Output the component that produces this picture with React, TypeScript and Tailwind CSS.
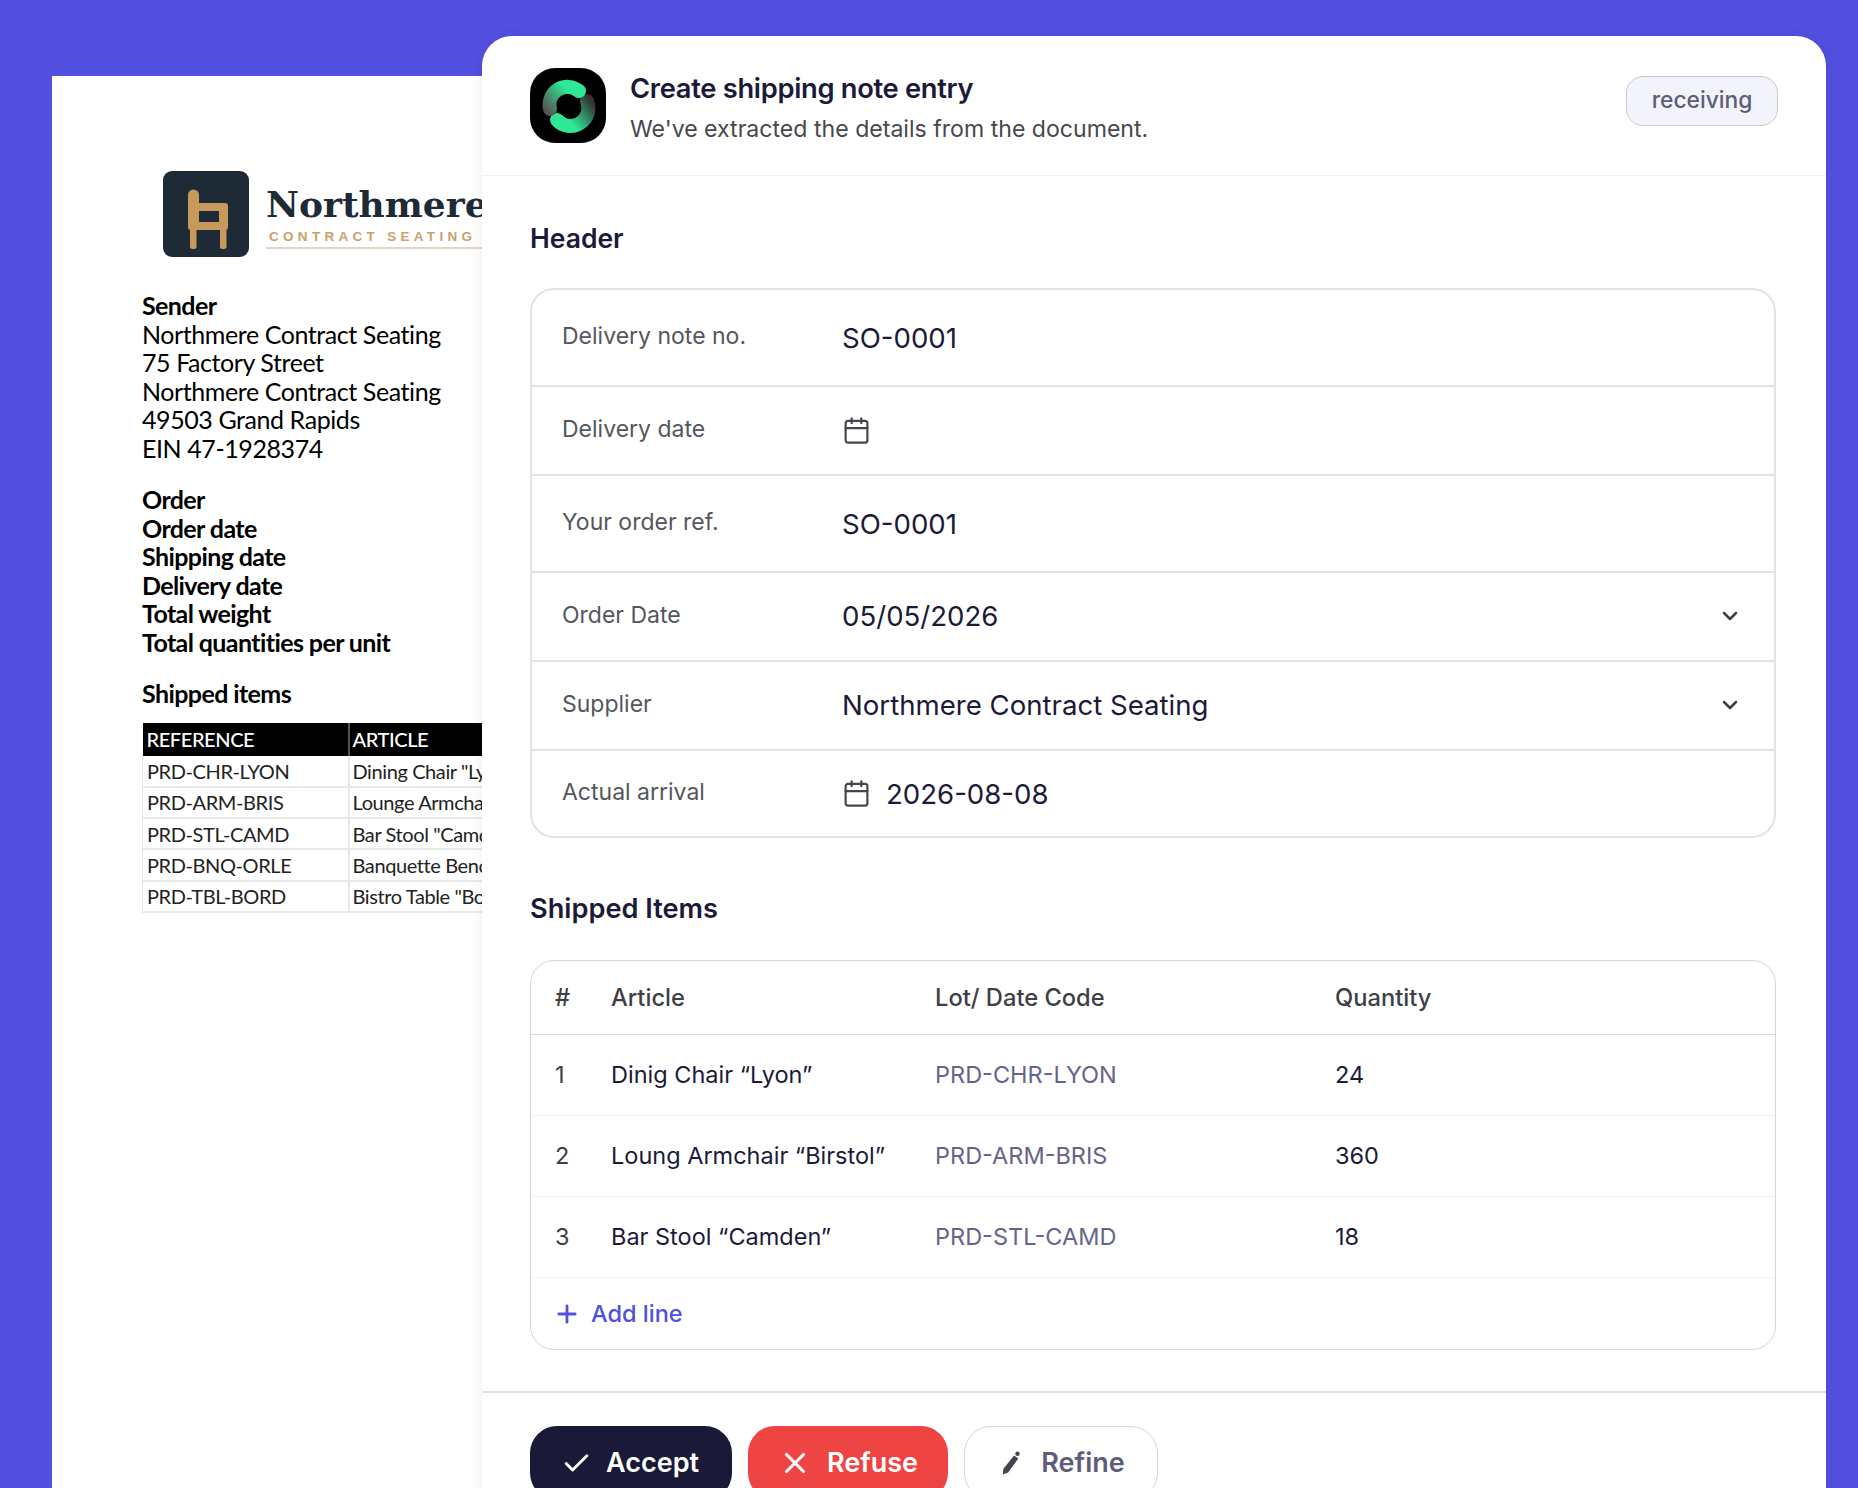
import { Calendar, Check, ChevronDown, Plus, X } from 'lucide-react';

const DOC_ROWS = [
  ['PRD-CHR-LYON', 'Dining Chair "Lyon"'],
  ['PRD-ARM-BRIS', 'Lounge Armchair "Bristol"'],
  ['PRD-STL-CAMD', 'Bar Stool "Camden"'],
  ['PRD-BNQ-ORLE', 'Banquette Bench "Orleans"'],
  ['PRD-TBL-BORD', 'Bistro Table "Bordeaux"'],
];

const ITEMS = [
  ['1', 'Dinig Chair “Lyon”', 'PRD-CHR-LYON', '24'],
  ['2', 'Loung Armchair “Birstol”', 'PRD-ARM-BRIS', '360'],
  ['3', 'Bar Stool “Camden”', 'PRD-STL-CAMD', '18'],
];

function AppLogo() {
  return (
    <svg width="76" height="75" viewBox="0 0 76 75" className="shrink-0">
      <defs>
        <linearGradient id="arcTop" gradientUnits="userSpaceOnUse" x1="46" y1="18" x2="16" y2="42">
          <stop offset="0.25" stopColor="#2ee896" />
          <stop offset="1" stopColor="#555555" />
        </linearGradient>
        <linearGradient id="arcBottom" gradientUnits="userSpaceOnUse" x1="30" y1="56" x2="60" y2="32">
          <stop offset="0.25" stopColor="#2ee896" />
          <stop offset="1" stopColor="#333333" />
        </linearGradient>
      </defs>
      <rect width="76" height="75" rx="25" fill="#000" />
      <path d="M27 52A18 18 0 0 0 57 33" fill="none" stroke="url(#arcBottom)" strokeWidth="14" strokeLinecap="round" />
      <path d="M49 23A18 18 0 0 0 20 41" fill="none" stroke="url(#arcTop)" strokeWidth="14" strokeLinecap="round" />
    </svg>
  );
}

function ChairLogo() {
  return (
    <svg width="86" height="86" viewBox="0 0 86 86" className="shrink-0">
      <rect width="86" height="86" rx="9" fill="#1f2a37" />
      <path
        fillRule="evenodd"
        d="M25 24a5.500 5.500 0 0 1 11 0v8h26a3 3 0 0 1 3 3v21a3 3 0 0 1-3 3H28a3 3 0 0 1-3-3zM36 40v11h20V40z"
        fill="#c79a5b"
      />
      <rect x="27" y="56" width="6.500" height="22" rx="2.500" fill="#c79a5b" />
      <rect x="57" y="56" width="6.500" height="22" rx="2.500" fill="#c79a5b" />
    </svg>
  );
}

function PencilIcon() {
  return (
    <svg width="20" height="24" viewBox="0 0 20 24" className="shrink-0" fill="#45454f">
      <path d="M13 4.500l4.300 3L7.200 21.500 1.800 23.500 2.300 18z" />
      <circle cx="16.500" cy="2.800" r="2.200" />
    </svg>
  );
}

function FormRow({ label, tall, children }: { label: string; tall?: boolean; children?: React.ReactNode }) {
  return (
    <div className={`flex items-center border-b-2 border-[#e3e3e5] pl-[30px] pr-[32px] last:h-[85px] last:border-b-0 ${tall ? 'h-[97px]' : 'h-[89px]'}`}>
      <div className="w-[280px] shrink-0 pb-[2px] text-[23px] text-[#55565c]">{label}</div>
      <div className={`flex min-w-0 flex-1 items-center text-[27.600px] text-[#1b1a38] ${tall ? 'mt-[3px]' : ''}`}>{children}</div>
    </div>
  );
}

export default function App() {
  return (
    <div className="flex h-[1488px] w-[1858px] overflow-hidden bg-[#534fe0] font-['Inter',sans-serif]">
      {/* Source document, cut off by the panel */}
      <div className="ml-[52px] mt-[76px] h-[1412px] w-[430px] shrink-0 overflow-hidden bg-white pl-[90px] pt-[95px] font-['Lato',sans-serif] text-[25px] leading-[28.500px] tracking-[-0.42px] text-black">
        <div className="flex w-[700px] pl-[21px]">
          <ChairLogo />
          <div className="ml-[17px] pt-[13px]">
            <div className="font-['DejaVu_Serif',serif] text-[36px] font-bold leading-[40px] tracking-normal text-[#1f2a37]">Northmere</div>
            <div className="mt-[5px] flex h-[20px] w-[300px] items-start border-b-2 border-[#e2d6c2] pl-[3px] font-['Liberation_Sans',sans-serif] text-[13.500px] font-bold leading-[16px] tracking-[4.300px] text-[#c9a26a]">
              CONTRACT SEATING
            </div>
          </div>
        </div>
        <div className="mt-[34px] w-[400px]">
          <div className="font-bold tracking-[-0.6px]">Sender</div>
          <div>Northmere Contract Seating</div>
          <div>75 Factory Street</div>
          <div>Northmere Contract Seating</div>
          <div>49503 Grand Rapids</div>
          <div>EIN 47-1928374</div>
        </div>
        <div className="mt-[23px] w-[400px] font-bold tracking-[-0.6px]">
          <div>Order</div>
          <div>Order date</div>
          <div>Shipping date</div>
          <div>Delivery date</div>
          <div>Total weight</div>
          <div>Total quantities per unit</div>
        </div>
        <div className="mt-[23px] font-bold tracking-[-0.6px]">Shipped items</div>
        <table className="mt-[15px] w-[700px] table-fixed border-collapse text-[20px] leading-[28px] tracking-[-0.4px] text-[#222]">
          <thead>
            <tr className="h-[33px] bg-black text-left font-medium text-white">
              <th className="w-[206px] border-r-2 border-[#555] pl-[4px] font-medium">REFERENCE</th>
              <th className="pl-[3px] font-medium">ARTICLE</th>
            </tr>
          </thead>
          <tbody>
            {DOC_ROWS.map(([ref, article]) => (
              <tr key={ref} className="h-[31.300px] border-b-2 border-[#e8e8e8]">
                <td className="border-l border-r-2 border-[#e8e8e8] pl-[4px]">{ref}</td>
                <td className="pl-[3px]">{article}</td>
              </tr>
            ))}
          </tbody>
        </table>
      </div>

      {/* Extraction panel */}
      <div className="relative z-10 mt-[36px] h-[1500px] w-[1344px] shrink-0 rounded-t-[30px] bg-white shadow-[0_0_14px_rgba(20,20,60,0.07)]">
        <div className="flex h-[140px] items-center border-b border-[#f0f0f6] pl-[48px] pr-[48px]">
          <AppLogo />
          <div className="ml-[24px] flex-1 pt-[5px]">
            <div className="text-[27.300px] font-semibold leading-[36px] tracking-[-0.3px] text-[#1b1a38]">Create shipping note entry</div>
            <div className="mt-[5.500px] text-[23.100px] leading-[32px] text-[#47474d]">We've extracted the details from the document.</div>
          </div>
          <div className="mb-[10px] flex h-[50px] w-[152px] items-center justify-center rounded-[17px] border border-[#c9c9d4] bg-[#f3f3fb] text-[22.800px] font-medium text-[#5e5c78]">
            receiving
          </div>
        </div>

        <div className="pl-[48px] pr-[50px]">
          <h2 className="mt-[43px] text-[26.500px] font-semibold leading-[38px] text-[#1b1a38]">Header</h2>
          <div className="mt-[31px] overflow-hidden rounded-[24px] border-2 border-[#e3e3e5]">
            <FormRow label="Delivery note no." tall>SO-0001</FormRow>
            <FormRow label="Delivery date">
              <Calendar size={29} strokeWidth={1.800} className="text-[#45454f]" />
            </FormRow>
            <FormRow label="Your order ref." tall>SO-0001</FormRow>
            <FormRow label="Order Date">
              <span className="flex-1">05/05/2026</span>
              <ChevronDown size={24} strokeWidth={2.500} className="text-[#3d3d45]" />
            </FormRow>
            <FormRow label="Supplier">
              <span className="flex-1">Northmere Contract Seating</span>
              <ChevronDown size={24} strokeWidth={2.500} className="text-[#3d3d45]" />
            </FormRow>
            <FormRow label="Actual arrival">
              <Calendar size={29} strokeWidth={1.800} className="text-[#45454f]" />
              <span className="ml-[15px] mt-[2px]">2026-08-08</span>
            </FormRow>
          </div>

          <h2 className="mt-[52px] text-[27.200px] font-semibold leading-[38px] text-[#1b1a38]">Shipped Items</h2>
          <div className="mt-[32px] overflow-hidden rounded-[24px] border-[1.500px] border-[#d6d6d9]">
            <div className="flex h-[74px] items-center border-b-[1.500px] border-[#d6d6d9] text-[23.700px] font-medium text-[#3f3f45]">
              <div className="w-[80px] pl-[24px]">#</div>
              <div className="w-[324px]">Article</div>
              <div className="w-[400px]">Lot/ Date Code</div>
              <div>Quantity</div>
            </div>
            {ITEMS.map(([n, article, lot, qty]) => (
              <div key={n} className="flex h-[81px] items-center border-b border-[#f2f2f6] text-[23.500px] text-[#1b1a38]">
                <div className="w-[80px] pl-[24px] text-[#3f3f45]">{n}</div>
                <div className="w-[324px]">{article}</div>
                <div className="w-[400px] text-[#65648a]">{lot}</div>
                <div>{qty}</div>
              </div>
            ))}
            <div className="flex h-[71px] items-center pl-[22px] text-[23.500px] font-medium text-[#5250e0]">
              <Plus size={28} strokeWidth={2.400} />
              <span className="ml-[10px]">Add line</span>
            </div>
          </div>
        </div>

        <div className="mt-[41px] flex gap-[16px] border-t-2 border-[#dfdfe2] pl-[48px] pt-[33px] text-[27px] font-semibold">
          <div className="flex h-[74px] w-[202px] items-center justify-center gap-[14px] rounded-[27px] bg-[#1a1a38] pr-[2px] text-white">
            <Check size={31} strokeWidth={2.200} />
            <span>Accept</span>
          </div>
          <div className="flex h-[74px] w-[200px] items-center justify-center gap-[15px] rounded-[27px] bg-[#ef4444] text-white">
            <X size={34} strokeWidth={2.200} />
            <span>Refuse</span>
          </div>
          <div className="flex h-[74px] w-[194px] items-center justify-center gap-[20px] rounded-[27px] border-[1.500px] border-[#d5d5db] bg-white pl-[4px] text-[#5e5c78]">
            <PencilIcon />
            <span>Refine</span>
          </div>
        </div>
      </div>
    </div>
  );
}
